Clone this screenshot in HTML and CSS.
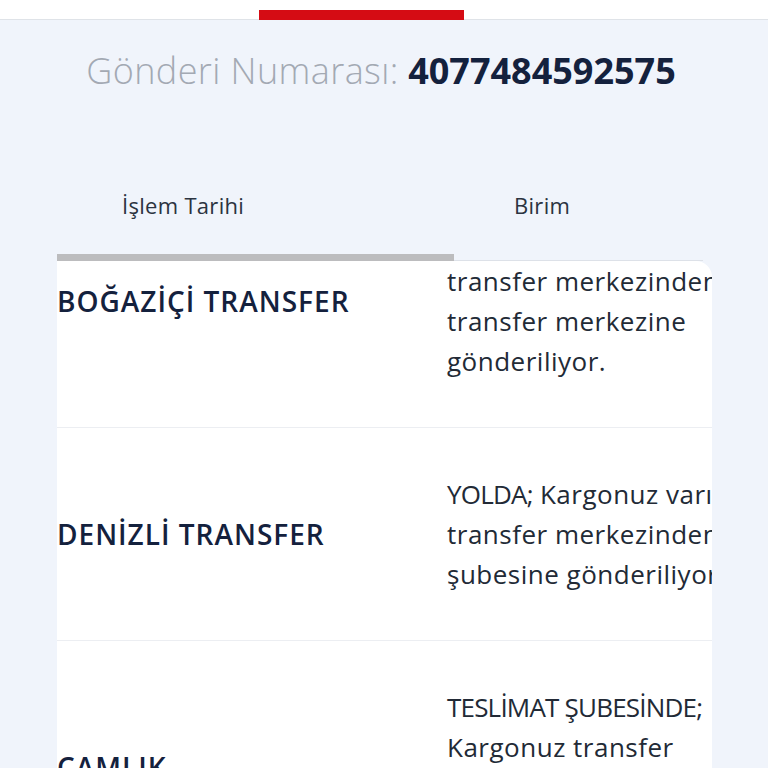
FILE: index.html
```html
<!DOCTYPE html>
<html lang="tr">

<head>
  <meta charset="UTF-8" />
  <meta name="viewport" content="width=device-width, initial-scale=1.0" />
  <title>Kargo Takip</title>
  <link rel="stylesheet" href="styles.css">
</head>

<body>
  <div class="topbar">
    <span class="topbar-active"></span>
  </div>

  <h1 class="shipment">
    <span class="shipment-label">Gönderi Numarası:</span>
    <span class="shipment-no">4077484592575</span>
  </h1>

  <div class="tabs">
    <div class="tab active">İşlem Tarihi</div>
    <div class="tab">Birim</div>
  </div>

  <div class="card">
    <div class="rows">
      <div class="row">
        <div class="unit">BOĞAZİÇİ TRANSFER</div>
        <div class="desc"><span class="caps">YOLDA;</span> Kargonuz varış<br>transfer merkezinden<br>transfer merkezine<br>gönderiliyor.</div>
      </div>
      <div class="row">
        <div class="unit">DENİZLİ TRANSFER</div>
        <div class="desc"><span class="caps">YOLDA;</span> Kargonuz varış<br>transfer merkezinden<br>şubesine gönderiliyor.</div>
      </div>
      <div class="row">
        <div class="unit">ÇAMLIK</div>
        <div class="desc"><span class="caps">TESLİMAT ŞUBESİNDE;</span><br>Kargonuz transfer<br>merkezinden teslimat<br>şubesine ulaştı.</div>
      </div>
    </div>
  </div>
</body>

</html>
```

FILE: styles.css
```css
body {
  margin: 0;
  padding: 0;
  height: 768px;
  overflow: hidden;
  background-color: #f0f4fb;
  font-family: "Open Sans", "Liberation Sans", sans-serif;
}

/* üst menü */
.topbar {
  height: 20px;
  padding: 10px 0 0 259px;
  background-color: #fff;
  border-bottom: 1px solid #dfe3e8;
  box-sizing: border-box;
}

.topbar-active {
  display: block;
  width: 205px;
  height: 10px;
  background-color: #d50c14;
}

/* gönderi numarası */
.shipment {
  margin: 28px 0 0;
  padding-right: 6px;
  text-align: center;
  font-size: 36px;
  line-height: 46px;
  font-weight: 400;
}

.shipment-label {
  color: #a3a9b3;
  font-weight: 300;
  letter-spacing: 0.4px;
}

.shipment-no {
  color: #14213d;
  font-weight: 700;
}

/* tablo başlıkları */
.tabs {
  display: flex;
  margin: 74px 0 0 57px;
}

.tab {
  box-sizing: border-box;
  height: 93px;
  padding: 22px 0 0 60px;
  font-size: 22px;
  letter-spacing: 0.3px;
  color: #2b3340;
  border-bottom: 1px solid #dde1e8;
}

.tab:first-child {
  width: 397px;
  padding-left: 65px;
}

.tab:last-child {
  width: 249px;
}

.tab.active {
  border-bottom: 7px solid #bcbcbe;
}

/* satırlar */
.card {
  margin-left: 57px;
  width: 655px;
  height: 520px;
  overflow: hidden;
  background-color: #fff;
  border-top-right-radius: 16px;
}

.rows {
  margin-top: -86px;
}

.row {
  display: flex;
  align-items: center;
  border-bottom: 1px solid #eceef2;
}

.unit {
  width: 390px;
  flex-shrink: 0;
  font-size: 28px;
  letter-spacing: 1px;
  font-weight: 600;
  color: #14213d;
}

.desc {
  padding: 46px 0;
  white-space: nowrap;
  font-size: 26px;
  letter-spacing: 0.5px;
  line-height: 40px;
  color: #222a36;
}

.desc .caps {
  letter-spacing: -0.8px;
}
```
